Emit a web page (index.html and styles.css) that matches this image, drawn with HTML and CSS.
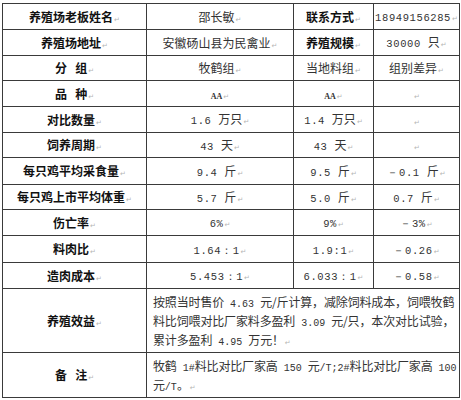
FILE: index.html
```html
<!DOCTYPE html>
<html lang="zh">
<head>
<meta charset="utf-8">
<link rel="stylesheet" href="styles.css">
</head>
<body>
<table class="sheet">
  <colgroup>
    <col class="c1"><col class="c2"><col class="c3"><col class="c4">
  </colgroup>
  <tr class="r26">
    <td class="lbl">养殖场老板姓名<span class="pm">↵</span></td>
    <td>邵长敏<span class="pm">↵</span></td>
    <td class="lbl">联系方式<span class="pm">↵</span></td>
    <td><span class="n">18949156285</span><span class="pm">↵</span></td>
  </tr>
  <tr class="r26">
    <td class="lbl">养殖场地址<span class="pm">↵</span></td>
    <td>安徽砀山县为民禽业<span class="pm">↵</span></td>
    <td class="lbl">养殖规模<span class="pm">↵</span></td>
    <td><span class="n">30000 </span>只<span class="pm">↵</span></td>
  </tr>
  <tr class="r25">
    <td class="lbl">分&nbsp;&nbsp;&nbsp;组<span class="pm">↵</span></td>
    <td>牧鹤组<span class="pm">↵</span></td>
    <td>当地料组<span class="pm">↵</span></td>
    <td>组别差异<span class="pm">↵</span></td>
  </tr>
  <tr class="r26">
    <td class="lbl">品&nbsp;&nbsp;&nbsp;种<span class="pm">↵</span></td>
    <td><span class="aa">AA</span><span class="pm">↵</span></td>
    <td><span class="aa">AA</span><span class="pm">↵</span></td>
    <td><span class="pm">↵</span></td>
  </tr>
  <tr class="r26">
    <td class="lbl">对比数量<span class="pm">↵</span></td>
    <td><span class="n">1.6 </span>万只<span class="pm">↵</span></td>
    <td><span class="n">1.4 </span>万只<span class="pm">↵</span></td>
    <td><span class="pm">↵</span></td>
  </tr>
  <tr class="r25">
    <td class="lbl">饲养周期<span class="pm">↵</span></td>
    <td><span class="n">43 </span>天<span class="pm">↵</span></td>
    <td><span class="n">43 </span>天<span class="pm">↵</span></td>
    <td><span class="pm">↵</span></td>
  </tr>
  <tr class="r27">
    <td class="lbl">每只鸡平均采食量<span class="pm">↵</span></td>
    <td><span class="n">9.4 </span>斤<span class="pm">↵</span></td>
    <td><span class="n">9.5 </span>斤<span class="pm">↵</span></td>
    <td><span class="n">－0.1 </span>斤<span class="pm">↵</span></td>
  </tr>
  <tr class="r25">
    <td class="lbl">每只鸡上市平均体重<span class="pm">↵</span></td>
    <td><span class="n">5.7 </span>斤<span class="pm">↵</span></td>
    <td><span class="n">5.0 </span>斤<span class="pm">↵</span></td>
    <td><span class="n">0.7 </span>斤<span class="pm">↵</span></td>
  </tr>
  <tr class="r26">
    <td class="lbl">伤亡率<span class="pm">↵</span></td>
    <td><span class="n">6%</span><span class="pm">↵</span></td>
    <td><span class="n">9%</span><span class="pm">↵</span></td>
    <td><span class="n">－3%</span><span class="pm">↵</span></td>
  </tr>
  <tr class="r27">
    <td class="lbl">料肉比<span class="pm">↵</span></td>
    <td><span class="n">1.64：1</span><span class="pm">↵</span></td>
    <td><span class="n">1.9:1</span><span class="pm">↵</span></td>
    <td><span class="n">－0.26</span><span class="pm">↵</span></td>
  </tr>
  <tr class="r26">
    <td class="lbl">造肉成本<span class="pm">↵</span></td>
    <td><span class="n">5.453：1</span><span class="pm">↵</span></td>
    <td><span class="n">6.033：1</span><span class="pm">↵</span></td>
    <td><span class="n">－0.58</span><span class="pm">↵</span></td>
  </tr>
  <tr class="r64">
    <td class="lbl">养殖效益<span class="pm">↵</span></td>
    <td colspan="3" class="para">按照当时售价<span class="n"> 4.63 </span>元/斤计算，减除饲料成本，饲喂牧鹤<br>料比饲喂对比厂家料多盈利<span class="n"> 3.09 </span>元/只，本次对比试验，<br>累计多盈利<span class="n"> 4.95 </span>万元！<span class="pm">↵</span></td>
  </tr>
  <tr class="r45">
    <td class="lbl">备&nbsp;&nbsp;&nbsp;注<span class="pm">↵</span></td>
    <td colspan="3" class="para">牧鹤<span class="n"> 1#</span>料比对比厂家高<span class="n"> 150 </span>元<span class="n">/T;2#</span>料比对比厂家高<span class="n"> 100</span><br>元<span class="n">/T</span>。<span class="pm">↵</span></td>
  </tr>
</table>
</body>
</html>
```

FILE: styles.css
```css
html, body {
  margin: 0;
  padding: 0;
  background: #ffffff;
}
body {
  padding: 3px 0 0 2px;
  font-family: "Noto Sans CJK SC", "DejaVu Sans", sans-serif;
  font-size: 12px;
  color: #333;
}
.sheet {
  border-collapse: collapse;
  table-layout: fixed;
  width: 457px;
}
.c1 { width: 144px; }
.c2 { width: 147px; }
.c3 { width: 80px; }
.c4 { width: 86px; }
.sheet td {
  border: 1px solid #3a3a3a;
  text-align: center;
  vertical-align: middle;
  padding: 0;
  line-height: 14px;
  white-space: nowrap;
  overflow: hidden;
}
.r25 { height: 25px; }
.r26 { height: 26px; }
.r27 { height: 27px; }
.r64 { height: 64px; }
.r45 { height: 45px; }
.sheet td.lbl {
  font-weight: 700;
  color: #111;
  font-size: 12px;
}
.sheet td.para {
  text-align: left;
  padding-left: 6px;
  line-height: 19px;
  letter-spacing: -0.15px;
}
.n {
  font-family: "Liberation Mono", monospace;
  font-size: 10.5px;
  font-weight: 400;
  letter-spacing: 0.6px;
  line-height: 1;
}
.para .n {
  font-size: 10px;
  letter-spacing: 0;
}
.aa {
  font-family: "Liberation Serif", serif;
  font-size: 8px;
  font-weight: 700;
  line-height: 1;
}
.pm {
  font-family: "DejaVu Sans", sans-serif;
  font-size: 7px;
  font-weight: 400;
  color: #b5b5b5;
  margin-left: 1px;
  line-height: 1;
}
```
